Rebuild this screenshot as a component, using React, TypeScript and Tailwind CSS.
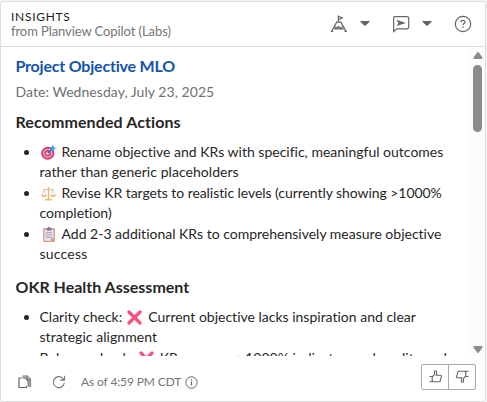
import type { ReactNode } from "react";

type LineProps = { className?: string; children: ReactNode };

function Line({ className = "", children }: LineProps) {
  return <span className={`block h-5 whitespace-pre ${className}`}>{children}</span>;
}

function TargetIcon() {
  return (
    <svg className="mr-[6px] ml-px inline-block h-[15px] w-[15px] align-[-3px]" viewBox="0 0 14 14">
      <circle cx="6.3" cy="7.7" r="6.1" fill="#cf3c70" />
      <circle cx="6.3" cy="7.7" r="4.3" fill="#f0c4d5" />
      <circle cx="6.3" cy="7.7" r="3.3" fill="#d64a7a" />
      <circle cx="6.3" cy="7.7" r="1.5" fill="#f1d3df" />
      <path d="M6.3 7.7L11 3" stroke="#3869b5" strokeWidth="1.1" />
      <path d="M8.7 5.2V2.6L11.4 0l.5 2.1 2.1.5-2.6 2.7z" fill="#3e9ddf" />
    </svg>
  );
}

function ScalesIcon() {
  return (
    <svg className="mr-[6px] ml-px inline-block h-[15px] w-[15px] align-[-3px]" viewBox="0 0 14 14" fill="none">
      <path d="M7 1v11" stroke="#dfb58c" strokeWidth="1.3" />
      <path d="M2 3.3h10" stroke="#edc58a" strokeWidth="1.1" />
      <path d="M2.8 3.5L.8 8.5M2.8 3.5l2 5M11.2 3.5l-2 5M11.2 3.5l2 5" stroke="#d8cbd5" strokeWidth=".8" />
      <path d="M0 8.3h5.4Q5 10.3 2.7 10.3T0 8.3zM8.6 8.3H14q-.4 2-2.7 2T8.6 8.3z" fill="#f3b957" />
      <path d="M3.3 13.6q0-1.8 1.8-1.8h3.8q1.8 0 1.8 1.8z" fill="#f5bf5a" />
    </svg>
  );
}

function ClipboardIcon() {
  return (
    <svg className="mr-[6px] ml-px inline-block h-[15px] w-[15px] align-[-3px]" viewBox="0 0 14 14">
      <rect x="2" y="1" width="11" height="13" rx="1" fill="#d99b82" />
      <path d="M3.2 2.3h8.6v8l-2.5 2.5H3.2z" fill="#e7e1f0" />
      <path d="M5 1.3h1.2a1.3 1.3 0 0 1 2.6 0H10v2H5z" fill="#80758d" />
      <path d="M4.5 5.3h6M4.5 7.4h6M4.5 9.5h6" stroke="#a39aac" strokeWidth=".9" />
      <path d="M9.3 12.8v-2.5h2.5z" fill="#b9adc5" />
    </svg>
  );
}

function CrossIcon() {
  return (
    <svg className="mr-[6px] ml-[5px] inline-block h-[15px] w-[15px] align-[-3px]" viewBox="0 0 15 15">
      <path d="M2 2l11 11M13 2L2 13" stroke="#f8527c" strokeWidth="3.2" strokeLinecap="round" />
    </svg>
  );
}

function PeakIcon() {
  return (
    <svg className="h-[18px] w-[18px]" viewBox="0 0 18 18" fill="none" stroke="#666" strokeWidth="1.2">
      <path d="M1.4 16.5L6.7 7.2h4.2l5.3 9.3M8.3 7V1.2l4 1.9-4 1.9" />
      <path d="M4.4 11.3l2 1.9 2-1.6 2.2 1.6 2.4-1.9M3.6 13.8h10.6M.8 16.4h2.4M14.4 16.4h2.4" />
    </svg>
  );
}

function ChatIcon() {
  return (
    <svg className="h-[18px] w-[18px]" viewBox="0 0 18 18">
      <path d="M3 1.6h12q1.7 0 1.7 1.7v8.8q0 1.7-1.7 1.7H4.7l-3.1 2.8V3q0-1.4 1.4-1.4z" fill="none" stroke="#666" strokeWidth="1.2" />
      <path d="M4.3 4.7l9.7 3.2-9.7 3.2 2.2-3.2z" fill="#666" />
    </svg>
  );
}

function Caret() {
  return (
    <svg className="h-[5px] w-[10px]" viewBox="0 0 10 5">
      <path d="M.6 0h8.8q.6.3.2.8L5.7 4.6q-.7.6-1.4 0L.4.8Q0 .3.6 0z" fill="#666" />
    </svg>
  );
}

function ThumbIcon({ className = "" }: { className?: string }) {
  return (
    <svg className={`h-[13px] w-[13px] ${className}`} viewBox="0 0 13 13" fill="none" stroke="#666" strokeWidth="1.1">
      <path d="M.5 6.5h2.7v5.2H.5M3.2 7l2.3-2.4V1.3Q6 .6 6.8.7q1 .3.9 1.5l-.5 3h4.4q1 .2.8 1.2l-1.2 4.5q-.3.9-1.2.9H4.8l-1.6-.7" />
    </svg>
  );
}

function ScrollArrow({ className = "" }: { className?: string }) {
  return (
    <svg className={`h-[7px] w-[10px] shrink-0 ${className}`} viewBox="0 0 10 7">
      <path d="M4.2.5Q5-.3 5.8.5L9.2 5q.8 1.5-.4 2H1.2Q0 6.5.8 5z" fill="#8b8b8b" />
    </svg>
  );
}

export default function App() {
  return (
    <div className="h-[402px] w-[487px] overflow-hidden bg-[#f3f3f3] pt-px pr-px font-['Lato','Liberation_Sans',sans-serif] text-[#262626] [font-variant-ligatures:none]">
      <div className="flex h-[401px] flex-col rounded-[3px] border border-[#dedede] bg-white">
        <header className="flex h-[45px] shrink-0 justify-between border-b border-[#dcdcdc] pl-[10px]">
          <div className="pt-[6px]">
            <div className="h-[15px] text-[12px] leading-[17px] tracking-[.7px] text-[#222]">INSIGHTS</div>
            <div className="text-[13px] leading-4 tracking-[-.08px] text-[#757575]">from Planview Copilot (Labs)</div>
          </div>
          <div className="flex h-[43px] items-center pr-[13px]">
            <PeakIcon />
            <span className="ml-[12px]"><Caret /></span>
            <span className="ml-[22px]"><ChatIcon /></span>
            <span className="ml-[12px]"><Caret /></span>
            <svg className="ml-[22px] h-[18px] w-[18px]" viewBox="0 0 18 18" fill="none" stroke="#666" strokeWidth="1.2">
              <circle cx="9" cy="9" r="7.7" />
              <path d="M6.9 7.1q.1-1.8 2.1-1.8t2.1 1.7q0 1-1.2 1.6-.9.5-.9 1.6M9 11.6v1.3" />
            </svg>
          </div>
        </header>

        <main className="flex h-[309px] shrink-0 overflow-hidden">
          <div className="w-[469px] shrink-0 pl-[14.5px]">
            <h1 className="mt-[9px] h-5 text-base leading-5 font-bold tracking-[-.2px] whitespace-nowrap text-[#1453ad]">Project Objective MLO</h1>
            <p className="mt-[6px] h-5 text-[14px] leading-5 tracking-[.05px] whitespace-nowrap text-[#707070]">Date: Wednesday, July 23, 2025</p>
            <h2 className="mt-[10px] h-5 text-base leading-5 font-bold tracking-[.1px] whitespace-nowrap">Recommended Actions</h2>
            <ul className="mt-[10px] list-disc pl-6 text-[14px] leading-5">
              <li className="mb-px">
                <Line><TargetIcon />Rename objective and KRs with specific, meaningful outcomes</Line>
                <Line className="tracking-[.05px]">rather than generic placeholders</Line>
              </li>
              <li className="mb-px">
                <Line className="tracking-[-.06px]"><ScalesIcon />Revise KR targets to realistic levels (currently showing &gt;1000%</Line>
                <Line>completion)</Line>
              </li>
              <li>
                <Line><ClipboardIcon />Add 2-3 additional KRs to comprehensively measure objective</Line>
                <Line className="tracking-[.2px]">success</Line>
              </li>
            </ul>
            <h2 className="mt-[13px] h-5 text-base leading-5 font-bold whitespace-nowrap">OKR Health Assessment</h2>
            <ul className="mt-[10px] list-disc pl-6 text-[14px] leading-5">
              <li className="mb-px">
                <Line>Clarity check:<CrossIcon />Current objective lacks inspiration and clear</Line>
                <Line className="tracking-[.05px]">strategic alignment</Line>
              </li>
              <li>
                <Line><span className="tracking-[.25px]">Balance check:</span><CrossIcon />KR progress &gt;1000% indicates goal quality and</Line>
              </li>
            </ul>
          </div>
          <div className="flex grow flex-col items-center bg-[#fcfcfc]">
            <ScrollArrow className="mt-[5px]" />
            <div className="mt-[6px] h-[67px] w-[9px] shrink-0 rounded-full bg-[#8b8b8b]" />
            <ScrollArrow className="mt-auto mb-[3px] rotate-180" />
          </div>
        </main>

        <footer className="flex grow items-center pt-[7px] pl-[17px] text-[12px] text-[#757575]">
          <svg className="h-[14px] w-[14px]" viewBox="0 0 14 14" fill="none" stroke="#666" strokeWidth="1.2">
            <path d="M4 3H1v9.5h7.5V11M4.5 1.2h4.8l3.2 3.2v6.8h-2" />
            <path d="M4.5 1h4.8l3.2 3.5V11H10V6.5L6.5 3h-2z" fill="#aaa" stroke="none" />
            <path d="M5 3.2h2l3 3v5M9 1.5v3.3h3.5" strokeWidth=".9" />
          </svg>
          <svg className="ml-[20px] h-[14px] w-[14px]" viewBox="0 0 14 14" fill="none" stroke="#777" strokeWidth="1.1">
            <path d="M12.3 8A5.5 5.5 0 1 1 10.8 3.3L12 4.6M12.5.8v4.3H8" />
          </svg>
          <span className="ml-[15px] w-[100px] tracking-[-.12px] whitespace-nowrap">As of 4:59 PM CDT</span>
          <svg className="ml-[4px] h-[13px] w-[13px]" viewBox="0 0 13 13" fill="none" stroke="#666">
            <circle cx="6.5" cy="6.5" r="5.7" />
            <path d="M6.5 5.5v4M6.5 3.3v1.2" strokeWidth="1.2" />
          </svg>
          <div className="mr-[9px] mb-[11px] ml-auto flex h-[26px] w-[55px] rounded-[2px] border border-[#aaa]">
            <button className="flex w-[27px] items-center justify-center border-r border-[#aaa]"><ThumbIcon /></button>
            <button className="flex w-[26px] items-center justify-center"><ThumbIcon className="rotate-180" /></button>
          </div>
        </footer>
      </div>
    </div>
  );
}
